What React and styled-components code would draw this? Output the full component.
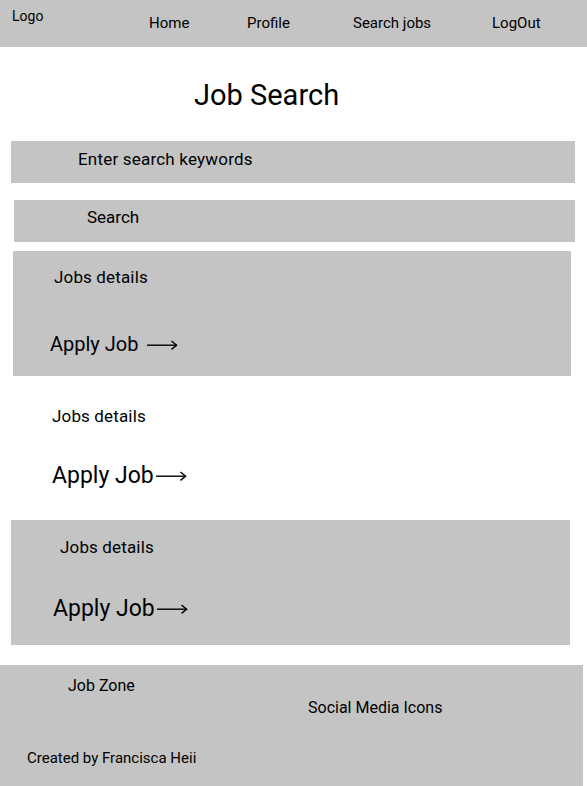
import React from "react";
import styled, { createGlobalStyle } from "styled-components";

const GREY = "#c4c4c4";

const GlobalStyle = createGlobalStyle`
  body {
    margin: 0;
    background: #fff;
    color: #000;
    font-family: Roboto, "Noto Sans", sans-serif;
  }
`;

const navLinks = [
  { label: "Home", width: 98 },
  { label: "Profile", width: 106 },
  { label: "Search jobs", width: 139 },
  { label: "LogOut", width: 0 },
];

const jobs = [
  { filled: true, x: 13, w: 558, top: 9, pt: 16, detailsX: 41, gap: 45, applyX: 37, size: 20, arrowGap: 9 },
  { filled: false, x: 13, w: 558, top: 10, pt: 20, detailsX: 39, gap: 36, applyX: 39, size: 23, arrowGap: 2 },
  { filled: true, x: 11, w: 559, top: 9, pt: 17, detailsX: 49, gap: 38, applyX: 42, size: 23, arrowGap: 2 },
];

const Arrow = () => (
  <ArrowIcon width="31" height="10" viewBox="0 0 31 10" fill="none">
    <path d="M0 5.2H29.5" stroke="#000" strokeWidth="1.4" />
    <path d="M24.5 1L29.6 5.2L24.5 9.4" stroke="#000" strokeWidth="1.4" strokeLinejoin="miter" />
  </ArrowIcon>
);

const App = () => {
  return (
    <Page>
      <GlobalStyle />
      <Header>
        <Logo>Logo</Logo>
        <Nav>
          {navLinks.map((link) => (
            <NavLink key={link.label} $w={link.width}>
              {link.label}
            </NavLink>
          ))}
        </Nav>
      </Header>

      <Title>Job Search</Title>

      <SearchInput>Enter search keywords</SearchInput>
      <SearchButton>Search</SearchButton>

      {jobs.map((job, index) => (
        <Card
          key={index}
          $filled={job.filled}
          $x={job.x}
          $w={job.w}
          $top={job.top}
          $pt={job.pt}
        >
          <Details $x={job.detailsX}>Jobs details</Details>
          <Apply $x={job.applyX} $gap={job.gap} $size={job.size}>
            Apply Job
            <ArrowWrap $gap={job.arrowGap}>
              <Arrow />
            </ArrowWrap>
          </Apply>
        </Card>
      ))}

      <Footer>
        <FooterTop>
          <Brand>Job Zone</Brand>
          <Social>Social Media Icons</Social>
        </FooterTop>
        <Credit>Created by Francisca Heii</Credit>
      </Footer>
    </Page>
  );
};

export default App;

const Page = styled.div`
  width: 587px;
  min-height: 786px;
  display: flex;
  flex-direction: column;
`;

const Header = styled.header`
  height: 47px;
  background: ${GREY};
  display: flex;
  align-items: flex-start;
  padding-left: 12px;
`;

const Logo = styled.div`
  width: 137px;
  margin-top: 8px;
  font-size: 14px;
`;

const Nav = styled.nav`
  display: flex;
  margin-top: 14px;
`;

const NavLink = styled.a`
  width: ${(p) => (p.$w ? `${p.$w}px` : "auto")};
  font-size: 15px;
  color: #000;
  text-decoration: none;
`;

const Title = styled.h1`
  margin: 31px 0 0;
  padding-left: 194px;
  font-size: 29px;
  font-weight: 400;
  line-height: normal;
`;

const SearchInput = styled.div`
  box-sizing: border-box;
  margin: 29px 0 0 11px;
  width: 564px;
  height: 42px;
  padding: 8px 0 0 67px;
  background: ${GREY};
  font-size: 17px;
  letter-spacing: 0.2px;
`;

const SearchButton = styled.div`
  box-sizing: border-box;
  margin: 17px 0 0 14px;
  width: 561px;
  height: 42px;
  padding: 7px 0 0 73px;
  background: ${GREY};
  font-size: 17px;
`;

const Card = styled.section`
  box-sizing: border-box;
  margin: ${(p) => p.$top}px 0 0 ${(p) => p.$x}px;
  width: ${(p) => p.$w}px;
  height: 125px;
  padding-top: ${(p) => p.$pt}px;
  background: ${(p) => (p.$filled ? GREY : "transparent")};
`;

const Details = styled.div`
  margin-left: ${(p) => p.$x}px;
  font-size: 17px;
  letter-spacing: 0.15px;
`;

const Apply = styled.div`
  margin: ${(p) => p.$gap}px 0 0 ${(p) => p.$x}px;
  font-size: ${(p) => p.$size}px;
  white-space: nowrap;
`;

const ArrowWrap = styled.span`
  display: inline-block;
  margin-left: ${(p) => p.$gap}px;
  vertical-align: middle;
  line-height: 0;
`;

const ArrowIcon = styled.svg`
  display: block;
  transform: translateY(-1px);
`;

const Footer = styled.footer`
  box-sizing: border-box;
  margin-top: 20px;
  width: 583px;
  flex: 1;
  min-height: 121px;
  padding-top: 11px;
  background: ${GREY};
`;

const FooterTop = styled.div`
  display: flex;
  align-items: flex-start;
`;

const Brand = styled.div`
  width: 240px;
  padding-left: 68px;
  font-size: 16px;
`;

const Social = styled.div`
  margin-top: 22px;
  font-size: 16px;
`;

const Credit = styled.div`
  margin-top: 32px;
  padding-left: 27px;
  font-size: 15px;
`;
